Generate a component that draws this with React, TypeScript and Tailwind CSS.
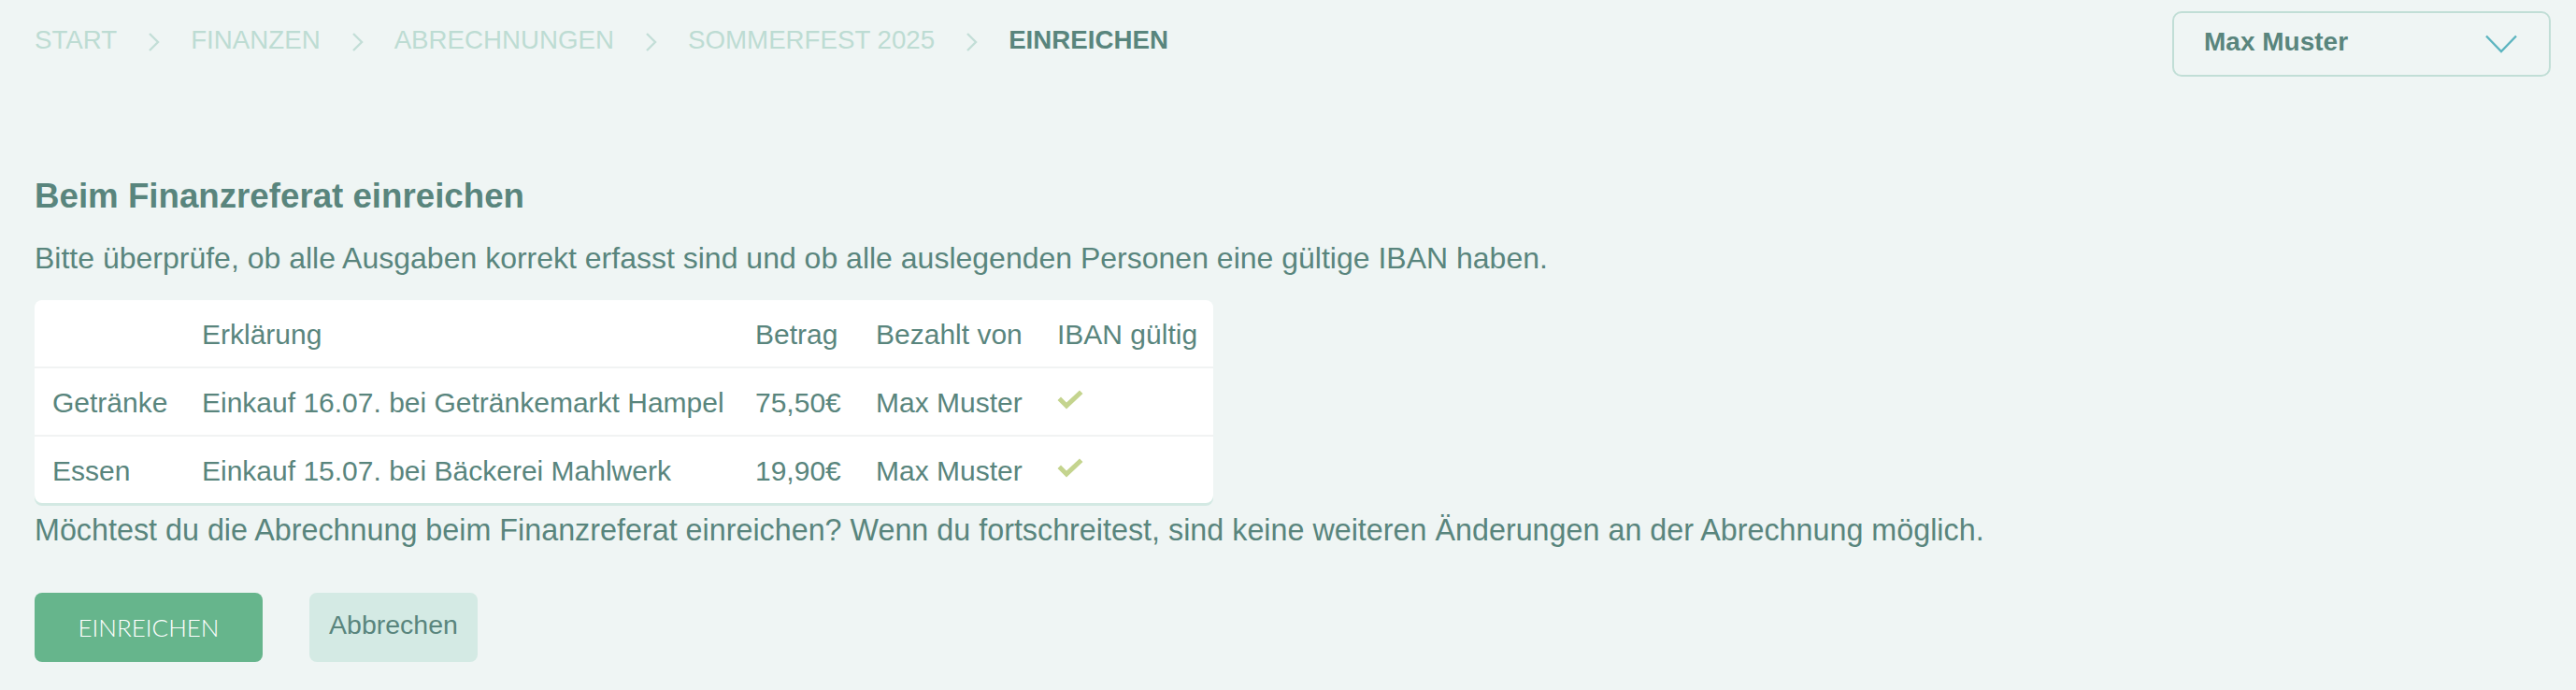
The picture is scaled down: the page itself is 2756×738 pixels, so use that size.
import { ReactNode } from "react";

const crumbs = ["START", "FINANZEN", "ABRECHNUNGEN", "SOMMERFEST 2025"];

const rows = [
  { cat: "Getränke", text: "Einkauf 16.07. bei Getränkemarkt Hampel", amount: "75,50€", by: "Max Muster" },
  { cat: "Essen", text: "Einkauf 15.07. bei Bäckerei Mahlwerk", amount: "19,90€", by: "Max Muster" },
];

function Crumb() {
  return (
    <svg className="mx-[33px] mt-[6px] h-[20px] w-[13px]" viewBox="0 0 13 20" fill="none">
      <path d="M2 1 L11 10 L2 19" stroke="#c3ded7" strokeWidth="2.4" />
    </svg>
  );
}

function Check() {
  return (
    <svg className="mt-[1px] h-[21px] w-[28px]" viewBox="0 0 28 21">
      <path d="M0.5 11 L4 7.5 L10 13.5 L24 0.5 L27.5 4 L10 20.5 Z" fill="#c4d48e" />
    </svg>
  );
}

function Row({ cells, first }: { cells: ReactNode[]; first?: boolean }) {
  return (
    <div
      className={
        "grid grid-cols-[160px_592px_129px_194px_186px] " +
        (first ? "" : "border-t-2 border-[#f1f3f3]")
      }
    >
      {cells.map((c, i) => (
        <div key={i} className="px-[19px] pt-[22px] pb-[19px] text-[30px] leading-[30px] whitespace-nowrap">
          {c}
        </div>
      ))}
    </div>
  );
}

export default function App() {
  return (
    <div
      className="min-h-[738px] bg-[#eff5f4] text-[#59857d] text-[32px]"
      style={{ fontFamily: '"Liberation Sans", Arial, sans-serif' }}
    >
      <header className="flex items-start justify-between pl-[37px] pr-[27px] pt-[12px]">
        <nav className="flex items-start pt-[17px] text-[27.7px] leading-[28px]">
          {crumbs.map((c) => (
            <div key={c} className="flex items-start">
              <span className="text-[#bddcd3]">{c}</span>
              <Crumb />
            </div>
          ))}
          <span className="font-bold">EINREICHEN</span>
        </nav>
        <button className="flex h-[70px] w-[405px] items-center justify-between rounded-[10px] border-2 border-[#c1ded6] pl-[32px] pr-[34px]">
          <span className="mb-[4px] text-[28px] font-bold leading-[28px]">Max Muster</span>
          <svg className="h-[20px] w-[34px]" viewBox="0 0 34 20" fill="none">
            <path d="M1 1.5 L17 18 L33 1.5" stroke="#5db5c0" strokeWidth="2.4" />
          </svg>
        </button>
      </header>

      <main className="pl-[37px]">
        <h2 className="mt-[110px] text-[36.7px] font-bold leading-[36px]">Beim Finanzreferat einreichen</h2>
        <p className="mt-[32px] leading-[32px]">
          Bitte überprüfe, ob alle Ausgaben korrekt erfasst sind und ob alle auslegenden Personen eine gültige IBAN haben.
        </p>

        <div className="mt-[29px] w-[1261px] rounded-[8px] bg-white shadow-[0_3px_0_#d3e9e3]">
          <Row first cells={["", "Erklärung", "Betrag", "Bezahlt von", "IBAN gültig"]} />
          {rows.map((r) => (
            <Row key={r.cat} cells={[r.cat, r.text, r.amount, r.by, <Check />]} />
          ))}
        </div>

        <p className="mt-[13px] text-[32.3px] leading-[32px]">
          Möchtest du die Abrechnung beim Finanzreferat einreichen? Wenn du fortschreitest, sind keine weiteren Änderungen an der Abrechnung möglich.
        </p>

        <div className="mt-[51px] flex gap-[50px]">
          <button
            className="h-[74px] w-[244px] rounded-[8px] bg-[#66b58c] text-[26px] font-light text-white"
            style={{ fontFamily: "Lato, sans-serif" }}
          >
            EINREICHEN
          </button>
          <button className="h-[74px] w-[180px] rounded-[8px] bg-[#d4eae4] pb-[6px] text-[28.5px]">Abbrechen</button>
        </div>
      </main>
    </div>
  );
}
